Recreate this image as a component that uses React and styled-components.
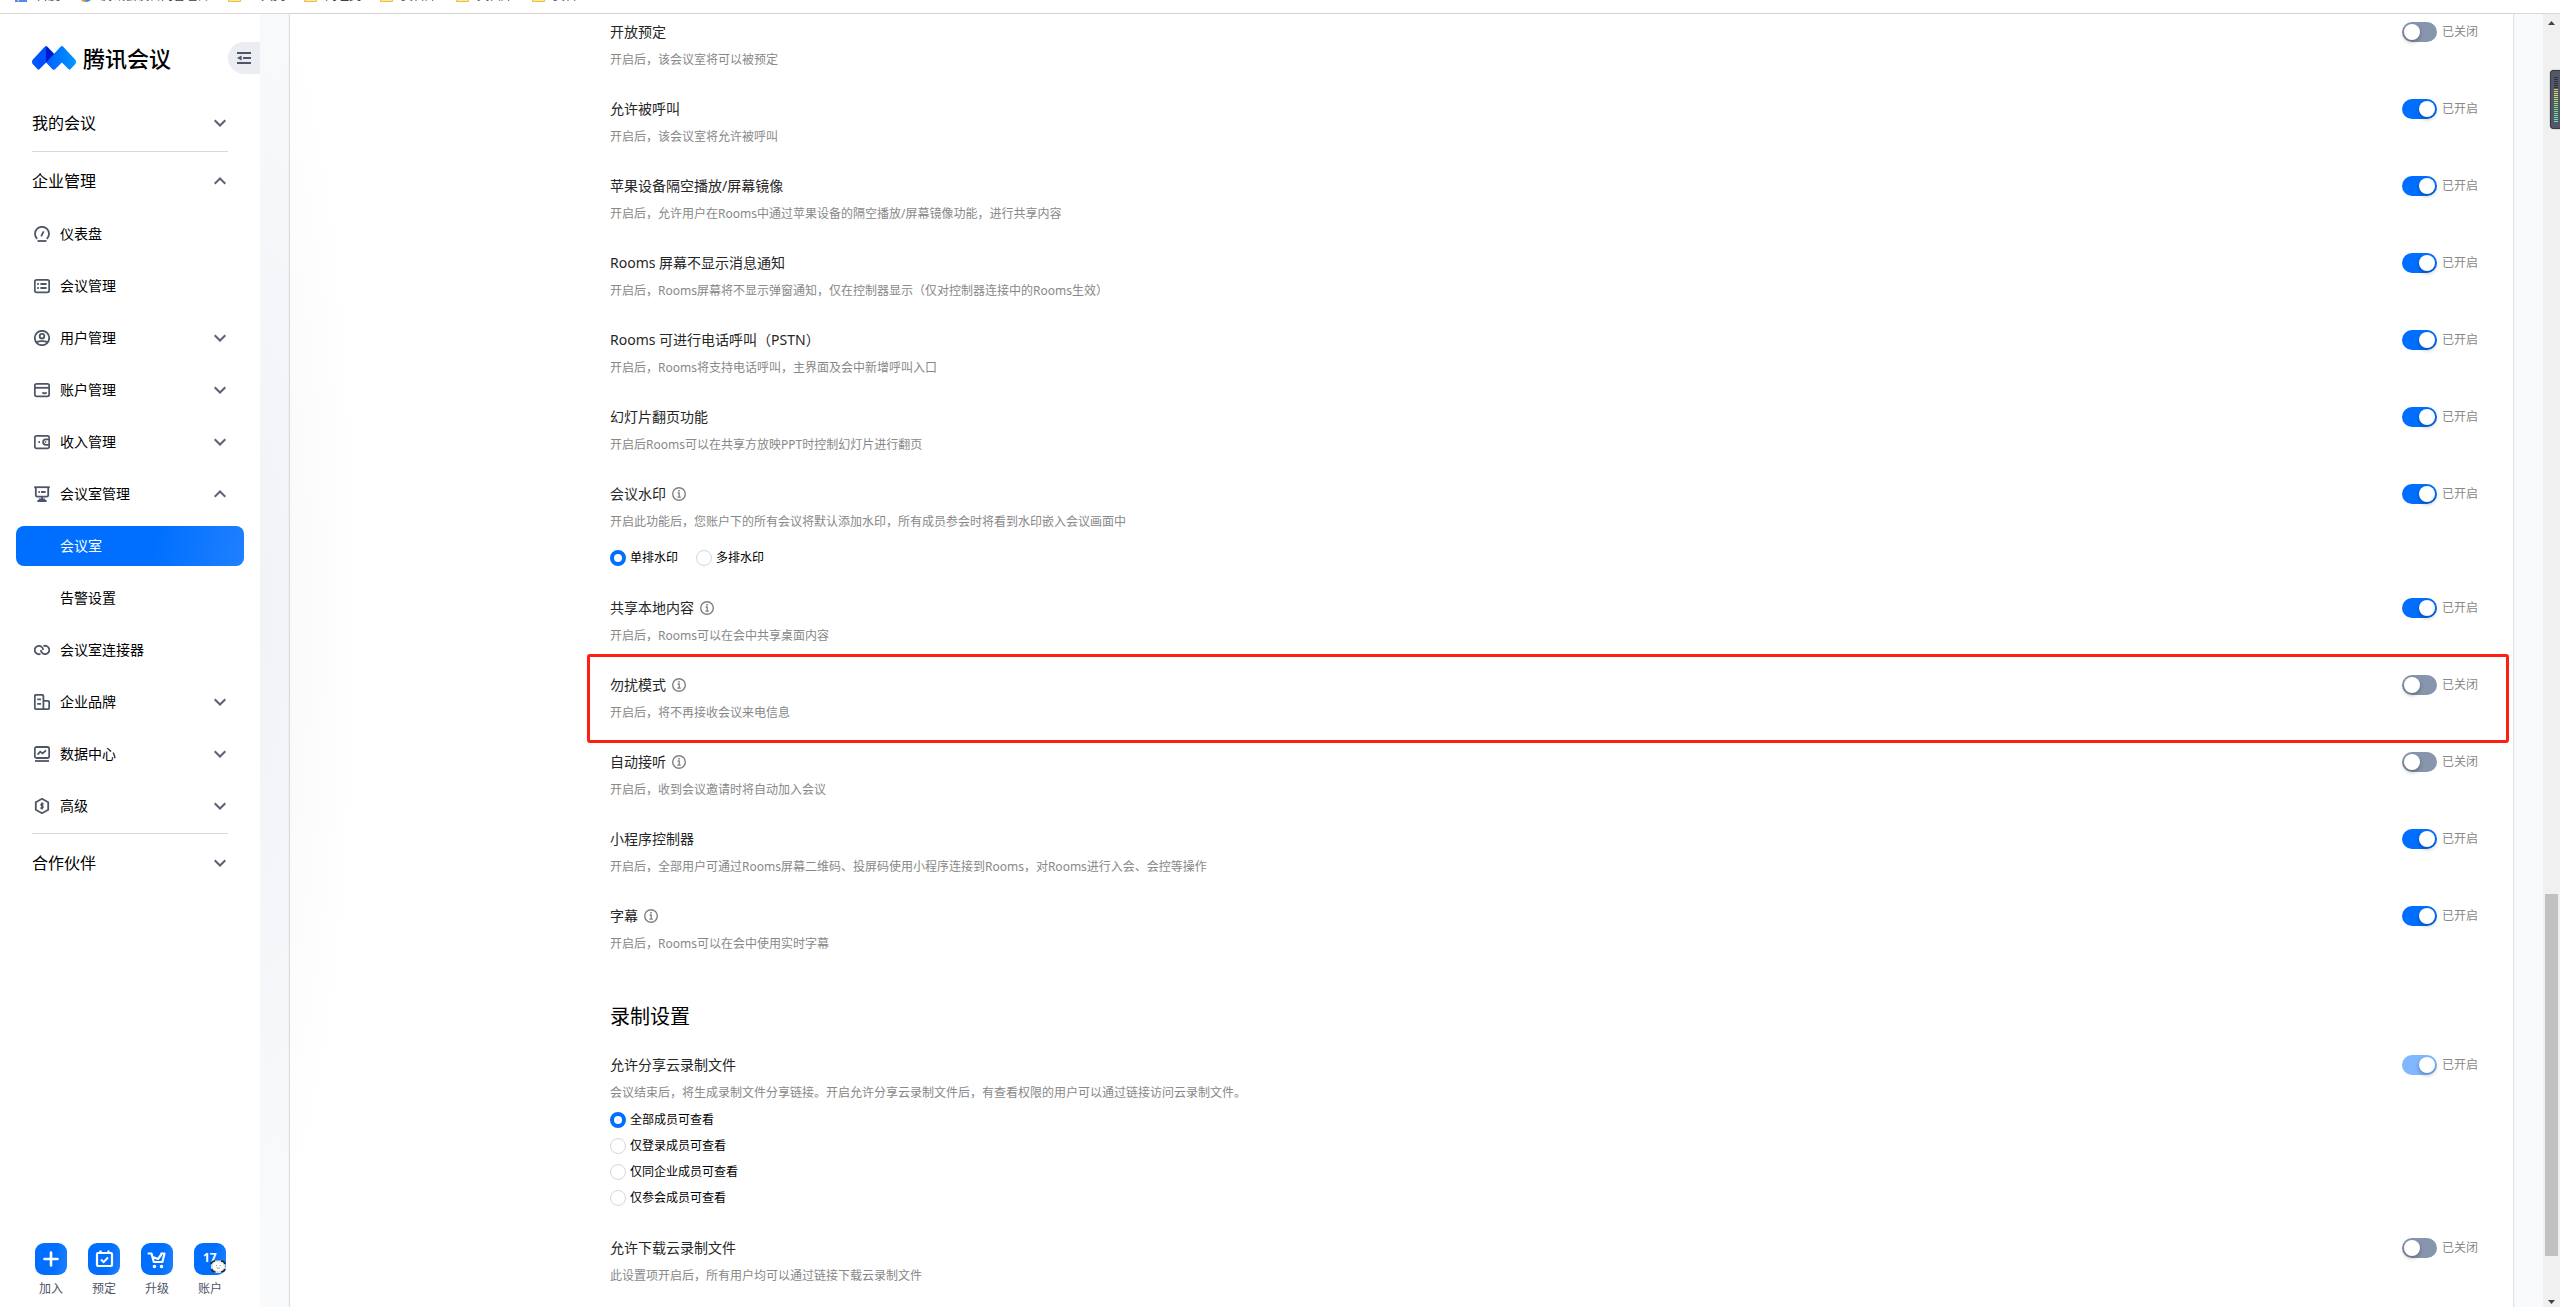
import React, { useState } from 'react';
import styled, { createGlobalStyle, css } from 'styled-components';

const variables = {
  colorPrimary: '#006fff',
  colorText: '#000',
  colorTitle: '#262626',
  colorMuted: '#888',
  colorIcon: '#4d5566',
  colorLine: '#d9d9d9',
  colorOff: '#8796ad',
  colorRed: '#ff1f11',
  fontPrimary: '"Noto Sans", "Noto Sans CJK SC", sans-serif',
};

const GlobalStyle = createGlobalStyle`
  *, *::before, *::after {
    box-sizing: border-box;
  }
  body {
    margin: 0;
    background: #fff;
    font-family: ${variables.fontPrimary};
    color: ${variables.colorText};
  }
  button {
    font: inherit;
    color: inherit;
    border: 0;
    padding: 0;
    background: none;
    cursor: pointer;
  }
  a {
    color: inherit;
    text-decoration: none;
  }
`;

const Page = styled.div`
  height: 100vh;
  display: flex;
  flex-direction: column;
  overflow: hidden;
`;

/* bookmarks */

const BookmarkBar = styled.nav`
  flex: none;
  height: 14px;
  display: flex;
  align-items: flex-start;
  gap: 19px;
  padding-left: 14px;
  overflow: hidden;
  border-bottom: 1px solid ${variables.colorLine};
`;

const Bookmark = styled.a`
  display: flex;
  align-items: flex-start;
  gap: 8px;
  height: 16px;
  margin-top: -12px;
  font-size: 12px;
  line-height: 16px;
  color: #3c4043;
  white-space: nowrap;
`;

const Body = styled.div`
  flex: 1;
  min-height: 0;
  display: flex;
  background: #f9fafc;
`;

/* sidebar */

const Sidebar = styled.aside`
  position: relative;
  z-index: 1;
  flex: none;
  width: 260px;
  display: flex;
  flex-direction: column;
  background: #fff;
  &::after {
    content: '';
    position: absolute;
    top: 0;
    bottom: 0;
    left: 100%;
    width: 100px;
    pointer-events: none;
    background: radial-gradient(ellipse 100% 50% at 0 46%, rgba(30, 35, 80, 0.035), transparent);
  }
`;

const Brand = styled.div`
  display: flex;
  align-items: center;
  padding: 28px 0 28px 32px;
`;

const BrandLink = styled.a`
  display: flex;
  align-items: center;
  gap: 7px;
  font-size: 22px;
  line-height: 32px;
  font-weight: 500;
`;

const CollapseButton = styled.button`
  display: flex;
  align-items: center;
  width: 32px;
  height: 32px;
  margin-left: auto;
  padding-left: 9px;
  border-radius: 16px 0 0 16px;
  background: #ebedf2;
`;

const GroupButton = styled.button`
  display: flex;
  align-items: center;
  justify-content: space-between;
  height: 42px;
  margin: 0 32px;
  padding-right: 2px;
  font-size: 16px;
  line-height: 24px;
`;

const Divider = styled.hr`
  width: 196px;
  height: 1px;
  margin: 7px 32px 8px;
  border: 0;
  background: ${variables.colorLine};
`;

const Menu = styled.ul`
  display: flex;
  flex-direction: column;
  gap: 12px;
  margin: 12px 16px 0;
  padding: 0;
  list-style: none;
`;

const MenuButton = styled.button`
  display: flex;
  align-items: center;
  gap: 10px;
  width: 100%;
  height: 40px;
  padding: 0 18px;
  border-radius: 8px;
  font-size: 14px;
  line-height: 20px;
  ${props =>
    props.$child &&
    css`
      padding-left: 44px;
    `};
  ${props =>
    props.$active &&
    css`
      color: #fff;
      background: linear-gradient(100deg, ${variables.colorPrimary} 60%, #1f80ff);
    `};
`;

const MenuLabel = styled.span`
  flex: 1;
  text-align: left;
`;

const QuickActions = styled.div`
  display: flex;
  gap: 21px;
  margin-top: auto;
  padding: 0 0 10px 35px;
`;

const QuickButton = styled.button`
  display: flex;
  flex-direction: column;
  align-items: center;
  gap: 6px;
  width: 32px;
  font-size: 12px;
  line-height: 16px;
  color: #4d5566;
  white-space: nowrap;
`;

const QuickTile = styled.span`
  display: block;
  width: 32px;
  height: 32px;
  border-radius: 9px;
  background: linear-gradient(100deg, ${variables.colorPrimary} 60%, #1f80ff);
  svg {
    display: block;
  }
`;

/* settings */

const Panel = styled.main`
  flex: 1;
  min-width: 0;
  margin: 0 29px;
  padding: 7px 35px 0 320px;
  overflow: hidden;
  background: #fff;
  border-left: 1px solid #dcdfe6;
  border-right: 1px solid #dfe2e8;
  box-shadow: 0 0 2px rgba(0, 0, 0, 0.08);
`;

const SectionHeading = styled.h2`
  margin: 21px 0 23px;
  font-size: 20px;
  line-height: 28px;
  font-weight: 400;
`;

const SettingRow = styled.section`
  position: relative;
  display: flex;
  justify-content: space-between;
  align-items: flex-start;
  padding-bottom: 28px;
`;

const Highlight = styled.div`
  position: absolute;
  top: -20px;
  bottom: 8px;
  left: -23px;
  right: -31px;
  border: 3px solid ${variables.colorRed};
  border-radius: 3px;
  pointer-events: none;
`;

const SettingTitle = styled.h3`
  display: flex;
  align-items: center;
  gap: 6px;
  margin: 0;
  font-size: 14px;
  line-height: 22px;
  font-weight: 400;
  color: ${variables.colorTitle};
`;

const SettingDescription = styled.p`
  margin: 7px 0 0;
  font-size: 12px;
  line-height: 20px;
  color: ${variables.colorMuted};
`;

const RadioGroup = styled.div`
  display: flex;
  flex-direction: ${props => (props.$stacked ? 'column' : 'row')};
  gap: ${props => (props.$stacked ? '4px' : '18px')};
  margin-top: ${props => (props.$stacked ? '6px' : '15px')};
`;

const RadioLabel = styled.label`
  display: flex;
  align-items: center;
  gap: 4px;
  font-size: 12px;
  line-height: 22px;
`;

const RadioInput = styled.input`
  appearance: none;
  width: 16px;
  height: 16px;
  margin: 0;
  border: 1px solid #d3d7e0;
  border-radius: 50%;
  background: #fff;
  &:checked {
    border: 4px solid ${variables.colorPrimary};
  }
`;

const SwitchLabel = styled.label`
  display: flex;
  align-items: center;
  gap: 5px;
  font-size: 12px;
  line-height: 22px;
  color: ${variables.colorMuted};
  white-space: nowrap;
`;

const SwitchInput = styled.input`
  appearance: none;
  display: flex;
  align-items: center;
  width: 35px;
  height: 20px;
  margin: 0;
  padding: 2px;
  border-radius: 10px;
  background: ${variables.colorOff};
  &::before {
    content: '';
    width: 16px;
    height: 16px;
    border-radius: 50%;
    background: #fff;
    box-shadow: 0 2px 4px rgba(0, 0, 0, 0.3);
  }
  &:checked {
    justify-content: flex-end;
    background: ${variables.colorPrimary};
  }
  &:disabled {
    background: #80b7ff;
  }
`;

/* scrollbar */

const Scrollbar = styled.div`
  flex: none;
  width: 17px;
  display: flex;
  flex-direction: column;
  align-items: center;
  background: #f0f0f0;
  svg {
    flex: none;
    display: block;
  }
`;

const ScrollGap = styled.div`
  flex: ${props => props.$size};
`;

const ScrollThumb = styled.div`
  flex: 362;
  width: 13px;
  background: #c1c1c1;
`;

const Meter = styled.div`
  position: fixed;
  z-index: 2;
  top: 70px;
  right: 0;
  width: 10px;
  height: 59px;
  border: 1px solid #383b46;
  border-right: 0;
  border-radius: 4px 0 0 4px;
  background: #545766;
  box-shadow: 0 0 1px #383b46;
`;

const icons = {
  dashboard: (
    <>
      <path d="M3.2 12.9A7 7 0 1 1 12.8 12.9" />
      <path d="M3.5 15h9" />
      <path d="M7.2 10.4 9.6 5.4" />
    </>
  ),
  list: (
    <>
      <rect x=".8" y="1.8" width="14.4" height="12.6" rx="1.8" />
      <path d="M3.2 6h1.6M6.4 6h6.2M3.2 10h1.6M6.4 10h6.2" />
    </>
  ),
  user: (
    <>
      <circle cx="8" cy="8" r="7.2" />
      <circle cx="8" cy="6.2" r="2.3" />
      <path d="M2.6 12.2c2.4-1.5 8.4-1.5 10.8 0" />
    </>
  ),
  card: (
    <>
      <rect x=".8" y="1.8" width="14.4" height="12.6" rx="1.8" />
      <path d="M1 5.8h14" />
      <path d="M8.4 10.4c1 1.2 3.2 1.2 4.2 0" />
    </>
  ),
  wallet: (
    <>
      <path d="M15.2 4.8V3.6a1.8 1.8 0 0 0-1.8-1.8H2.6A1.8 1.8 0 0 0 .8 3.6v9a1.8 1.8 0 0 0 1.8 1.8h10.8a1.8 1.8 0 0 0 1.8-1.8v-1.4" />
      <path d="M15.2 5.4h-3.4a2.7 2.7 0 0 0 0 5.4h3.4z" />
      <path d="M4.4 8h1.5M11.2 8h1" />
    </>
  ),
  board: (
    <>
      <path d="M.2 1.2h15.6" />
      <path d="M1.8 1.4v7.8a1.4 1.4 0 0 0 1.4 1.4h9.6a1.4 1.4 0 0 0 1.4-1.4V1.4" />
      <path d="M4.4 6h1.4M7 6h4.6M8 10.8v3.6M3.4 15h9.2M4.8 13.4h6.4" />
    </>
  ),
  link: (
    <>
      <path d="M6.5 11.9A4.2 4.2 0 1 1 9.1 8" />
      <path d="M9.5 4.1A4.2 4.2 0 1 1 6.9 8" />
    </>
  ),
  building: (
    <>
      <path d="M9.4 15.2V2.2A1.4 1.4 0 0 0 8 .8H2.2A1.4 1.4 0 0 0 .8 2.2v11.6a1.4 1.4 0 0 0 1.4 1.4h11.6a1.4 1.4 0 0 0 1.4-1.4V8.2a1.4 1.4 0 0 0-1.4-1.4H9.4" />
      <path d="M3.2 5.4h3.8M3.2 9.8h3.8" />
    </>
  ),
  chart: (
    <>
      <rect x=".8" y="1" width="14.4" height="11" rx="1.8" />
      <path d="M3.6 8.6l2.6-3 2.4 1.8L12 4.4" />
      <path d="M1 15h14" />
    </>
  ),
  hexagon: (
    <>
      <path d="M8 .8l6.2 3.4v7.6L8 15.2l-6.2-3.4V4.2z" />
      <path d="M9.6 6.2c-1.8-1-3.4.6-1.6 1.6s.6 3-1.6 2M8 4.4v7.2" />
    </>
  ),
};

const MenuIcon = ({ name }) => (
  <svg width="16" height="16" viewBox="0 0 16 16" fill="none" stroke={variables.colorIcon} strokeWidth="1.8" aria-hidden="true">
    {icons[name]}
  </svg>
);

const Chevron = ({ open }) => (
  <svg width="12" height="8" viewBox="0 0 12 8" fill="none" stroke="#5b6272" strokeWidth="2" aria-hidden="true">
    <path d={open ? 'M.7 6.8 6 1.5l5.3 5.3' : 'M.7 1.2 6 6.5l5.3-5.3'} />
  </svg>
);

const Logo = () => (
  <svg width="44" height="24" viewBox="0 0 44 24" aria-hidden="true">
    <defs>
      <linearGradient id="logoLeft" x1="0" x2="1">
        <stop offset="0" stopColor="#0057ff" />
        <stop offset="1" stopColor="#0048ff" />
      </linearGradient>
      <linearGradient id="logoRight" x1="0" x2="1">
        <stop offset="0" stopColor="#0060ff" />
        <stop offset="1" stopColor="#0098ff" />
      </linearGradient>
    </defs>
    <path d="M13 .6c.7-.7 1.5-.7 2.2 0L28.4 14 22 23.3c-.5.6-1 .6-1.5 0L14.2 16.5 7.4 23.3c-.6.6-1.2.6-1.8 0L.9 18.2c-1.2-1.3-1.2-3.3 0-4.6z" fill="url(#logoLeft)" />
    <path d="M14.2.2 22 8.5 14.2 16.5z" fill="#0018c8" />
    <path d="M28.8.6c.7-.7 1.5-.7 2.2 0l12.100 13c1.2 1.3 1.2 3.3 0 4.6l-4.7 5.1c-.6.6-1.2.6-1.8 0L29.9 16.5 23.1 23.3c-.6.6-1.2.6-1.8 0L14.6 16z" fill="url(#logoRight)" />
  </svg>
);

const CollapseIcon = () => (
  <svg width="14" height="12" viewBox="0 0 14 12" aria-hidden="true">
    <path d="M0 1h14M6 6h8M0 11h14" stroke={variables.colorIcon} strokeWidth="2" />
    <path d="M0 6l4.6-2.4v4.8z" fill={variables.colorIcon} />
  </svg>
);

const InfoIcon = () => (
  <svg width="14" height="14" viewBox="0 0 14 14" fill="none" stroke="#808080" aria-hidden="true">
    <circle cx="7" cy="7" r="6.3" strokeWidth="1.4" />
    <path d="M5.6 6h1.6v4M5.4 10.2h3.4" strokeWidth="1.3" />
    <path d="M6.2 3.8h1.6" strokeWidth="1.5" />
  </svg>
);

const FolderIcon = () => (
  <svg width="13" height="14" viewBox="0 0 13 14" aria-hidden="true">
    <path d="M.5 1.5h4l1 2h7v10H.5z" fill="#ffe69b" stroke="#e5c04a" />
  </svg>
);

const quickIcons = {
  join: <path d="M16 9.5v13M9.5 16h13" strokeWidth="2.6" strokeLinecap="round" />,
  book: (
    <>
      <rect x="9" y="10" width="15" height="13" rx="1" strokeWidth="2.2" />
      <path d="M12.5 7.5V11M20.5 7.5V11" strokeWidth="2.2" />
      <path d="M13 16.5l2.6 2.6 4.4-4.6" strokeWidth="2" />
    </>
  ),
  upgrade: (
    <>
      <path d="M7.5 10.500h3l2.3 8.500h8.6l2.1-8.500h-3.200M13 14.5l4 1.5 3-4" strokeWidth="2.2" strokeLinecap="round" strokeLinejoin="round" />
      <circle cx="13.5" cy="23.5" r="1" strokeWidth="1.6" />
      <circle cx="20.5" cy="23.5" r="1" strokeWidth="1.6" />
    </>
  ),
  account: (
    <>
      <text x="9" y="19" fontSize="12" fontWeight="700" fill="#fff" stroke="none">
        17
      </text>
      <rect x="17" y="17.5" width="14.5" height="12.5" rx="5" fill="#ddd" stroke="none" />
      <path d="M17 21c.5-2 2-3 4-3M27 18c2 0 3.500 1 4 3M17.500 26c.5 2 2 3 4 3M31 26c-.5 2-2 3-4 3" stroke="#222" strokeWidth="1.6" />
      <ellipse cx="24.2" cy="23.4" rx="5.6" ry="4.800" fill="#fff" stroke="none" />
      <path d="M22.600 22v1M26 22v1M22.600 24.600c.8.9 2.600.9 3.400 0" stroke="#888" strokeWidth=".9" />
    </>
  ),
};

const bookmarks = ['工具类', '网址类', '资料库', '文档库', '资料'];

const menu = [
  { icon: 'dashboard', label: '仪表盘' },
  { icon: 'list', label: '会议管理' },
  { icon: 'user', label: '用户管理', arrow: 'down' },
  { icon: 'card', label: '账户管理', arrow: 'down' },
  { icon: 'wallet', label: '收入管理', arrow: 'down' },
  { icon: 'board', label: '会议室管理', arrow: 'up' },
  { label: '会议室', active: true },
  { label: '告警设置' },
  { icon: 'link', label: '会议室连接器' },
  { icon: 'building', label: '企业品牌', arrow: 'down' },
  { icon: 'chart', label: '数据中心', arrow: 'down' },
  { icon: 'hexagon', label: '高级', arrow: 'down' },
];

const quickActions = [
  { icon: 'join', label: '加入' },
  { icon: 'book', label: '预定' },
  { icon: 'upgrade', label: '升级' },
  { icon: 'account', label: '账户' },
];

const roomSettings = [
  { title: '开放预定', text: '开启后，该会议室将可以被预定', on: false },
  { title: '允许被呼叫', text: '开启后，该会议室将允许被呼叫', on: true },
  { title: '苹果设备隔空播放/屏幕镜像', text: '开启后，允许用户在Rooms中通过苹果设备的隔空播放/屏幕镜像功能，进行共享内容', on: true },
  { title: 'Rooms 屏幕不显示消息通知', text: '开启后，Rooms屏幕将不显示弹窗通知，仅在控制器显示（仅对控制器连接中的Rooms生效）', on: true },
  { title: 'Rooms 可进行电话呼叫（PSTN）', text: '开启后，Rooms将支持电话呼叫，主界面及会中新增呼叫入口', on: true },
  { title: '幻灯片翻页功能', text: '开启后Rooms可以在共享方放映PPT时控制幻灯片进行翻页', on: true },
  {
    title: '会议水印',
    text: '开启此功能后，您账户下的所有会议将默认添加水印，所有成员参会时将看到水印嵌入会议画面中',
    on: true,
    info: true,
    options: ['单排水印', '多排水印'],
  },
  { title: '共享本地内容', text: '开启后，Rooms可以在会中共享桌面内容', on: true, info: true },
  { title: '勿扰模式', text: '开启后，将不再接收会议来电信息', on: false, info: true, highlight: true },
  { title: '自动接听', text: '开启后，收到会议邀请时将自动加入会议', on: false, info: true },
  { title: '小程序控制器', text: '开启后，全部用户可通过Rooms屏幕二维码、投屏码使用小程序连接到Rooms，对Rooms进行入会、会控等操作', on: true },
  { title: '字幕', text: '开启后，Rooms可以在会中使用实时字幕', on: true, info: true },
];

const recordSettings = [
  {
    title: '允许分享云录制文件',
    text: '会议结束后，将生成录制文件分享链接。开启允许分享云录制文件后，有查看权限的用户可以通过链接访问云录制文件。',
    on: true,
    disabled: true,
    stacked: true,
    options: ['全部成员可查看', '仅登录成员可查看', '仅同企业成员可查看', '仅参会成员可查看'],
  },
  { title: '允许下载云录制文件', text: '此设置项开启后，所有用户均可以通过链接下载云录制文件', on: false },
];

const Setting = ({ title, text, on, info, options, stacked, disabled, highlight }) => {
  const [checked, setChecked] = useState(on);
  return (
    <SettingRow>
      <div>
        <SettingTitle>
          {title}
          {info && <InfoIcon />}
        </SettingTitle>
        <SettingDescription>{text}</SettingDescription>
        {options && (
          <RadioGroup role="radiogroup" aria-label={title} $stacked={stacked}>
            {options.map((option, i) => (
              <RadioLabel key={option}>
                <RadioInput type="radio" name={title} defaultChecked={i === 0} />
                {option}
              </RadioLabel>
            ))}
          </RadioGroup>
        )}
      </div>
      <SwitchLabel>
        <SwitchInput
          type="checkbox"
          role="switch"
          checked={checked}
          disabled={disabled}
          onChange={e => setChecked(e.target.checked)}
        />
        {checked ? '已开启' : '已关闭'}
      </SwitchLabel>
      {highlight && <Highlight />}
    </SettingRow>
  );
};

const meterColor = i => {
  if (i < 6) return '#2f323c';
  return `hsl(${42 + (i - 6) * 8}, 65%, 66%)`;
};

const App = () => (
  <Page>
    <GlobalStyle />
    <BookmarkBar>
      <Bookmark href="#baidu">
        <svg width="14" height="14" viewBox="0 0 14 14" aria-hidden="true">
          <path d="M1 2h12v12H1z" fill="#4a8cf7" />
          <path d="M1 10h4v4z" fill="#fbd84b" />
        </svg>
        百度
      </Bookmark>
      <Bookmark href="#meeting">
        <svg width="14" height="14" viewBox="0 0 14 14" aria-hidden="true">
          <circle cx="7" cy="7" r="7" fill="#2b8cf0" />
          <path d="M0 7a7 7 0 0 0 7 7L5 9z" fill="#f59a1c" />
        </svg>
        腾讯会议官网管理台
      </Bookmark>
      {bookmarks.map(label => (
        <Bookmark key={label} href="#folder">
          <FolderIcon />
          {label}
        </Bookmark>
      ))}
    </BookmarkBar>
    <Body>
      <Sidebar>
        <Brand>
          <BrandLink href="#home">
            <Logo />
            腾讯会议
          </BrandLink>
          <CollapseButton aria-label="收起">
            <CollapseIcon />
          </CollapseButton>
        </Brand>
        <GroupButton>
          我的会议
          <Chevron />
        </GroupButton>
        <Divider />
        <GroupButton>
          企业管理
          <Chevron open />
        </GroupButton>
        <Menu>
          {menu.map(item => (
            <li key={item.label}>
              <MenuButton $child={!item.icon} $active={item.active}>
                {item.icon && <MenuIcon name={item.icon} />}
                <MenuLabel>{item.label}</MenuLabel>
                {item.arrow && <Chevron open={item.arrow === 'up'} />}
              </MenuButton>
            </li>
          ))}
        </Menu>
        <Divider />
        <GroupButton>
          合作伙伴
          <Chevron />
        </GroupButton>
        <QuickActions>
          {quickActions.map(action => (
            <QuickButton key={action.label}>
              <QuickTile>
                <svg width="32" height="32" viewBox="0 0 32 32" fill="none" stroke="#fff" aria-hidden="true">
                  {quickIcons[action.icon]}
                </svg>
              </QuickTile>
              {action.label}
            </QuickButton>
          ))}
        </QuickActions>
      </Sidebar>
      <Panel>
        {roomSettings.map(item => (
          <Setting key={item.title} {...item} />
        ))}
        <SectionHeading>录制设置</SectionHeading>
        {recordSettings.map(item => (
          <Setting key={item.title} {...item} />
        ))}
      </Panel>
      <Scrollbar aria-hidden="true">
        <svg width="17" height="17" viewBox="0 0 17 17">
          <path d="M5 11h7L8.5 7z" fill="#444" />
        </svg>
        <ScrollGap $size={863} />
        <ScrollThumb />
        <ScrollGap $size={37} />
        <svg width="17" height="14" viewBox="0 0 17 14">
          <path d="M5 7h7l-3.5 4z" fill="#444" />
        </svg>
      </Scrollbar>
    </Body>
    <Meter aria-hidden="true">
      <svg width="8" height="57" viewBox="0 0 8 57">
        {Array.from({ length: 23 }, (_, i) => (
          <rect key={i} x="3" y={6 + i * 2} width="4" height="1" fill={meterColor(i)} />
        ))}
      </svg>
    </Meter>
  </Page>
);

export default App;
